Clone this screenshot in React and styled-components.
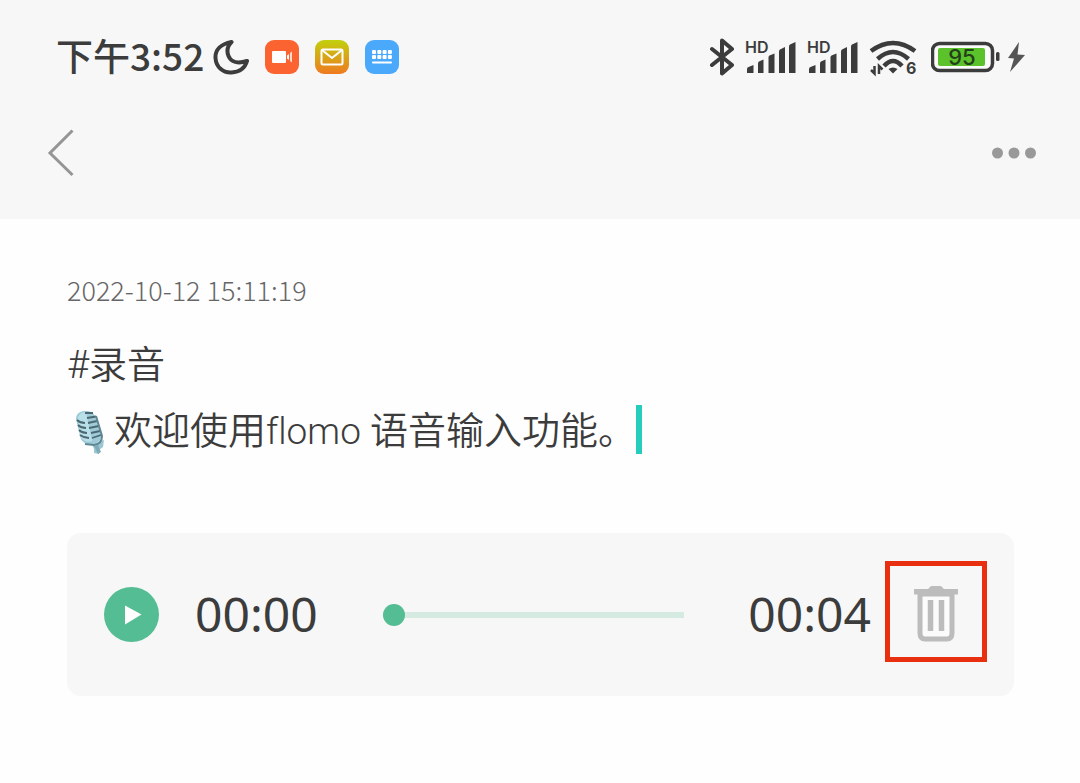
import React, { useState } from 'react';
import styled, { createGlobalStyle } from 'styled-components';

const GlobalStyle = createGlobalStyle`
  body {
    margin: 0;
    background-color: #fefefe;
    color: #3c3c3c;
    font-family: Roboto, 'Noto Sans CJK SC', sans-serif;
  }

  button {
    padding: 0;
    border: none;
    background: none;
    cursor: pointer;
  }

  svg {
    display: block;
    flex-shrink: 0;
  }
`;

const Header = styled.header`
  background-color: #f7f7f7;
  padding-bottom: 39px;
`;

const StatusBar = styled.div`
  display: flex;
  justify-content: space-between;
  align-items: center;
  height: 114px;
  padding: 0 54px 0 56px;
`;

const StatusGroup = styled.div`
  display: flex;
  align-items: center;
  gap: ${(props) => props.$gap}px;
`;

const Clock = styled.time`
  padding-bottom: 4px;
  font-family: 'Noto Sans CJK SC', sans-serif;
  font-size: 37px;
  line-height: 40px;
  font-weight: 500;
`;

const AppBadges = styled.div`
  display: flex;
  gap: 16px;
  margin-left: 7px;
`;

const AppBadge = styled.span`
  display: flex;
  justify-content: center;
  align-items: center;
  width: 34px;
  height: 34px;
  border-radius: 9px;
  background: ${(props) => props.$fill};
`;

const NavBar = styled.nav`
  display: flex;
  justify-content: space-between;
  align-items: center;
  height: 62px;
  padding: 8px 42px 0 46px;
  box-sizing: border-box;
  margin-top: 4px;
`;

const Memo = styled.main`
  padding: 53px 66px 88px 67px;
`;

const MemoDate = styled.time`
  display: block;
  font-family: 'Noto Sans CJK SC', sans-serif;
  font-size: 27px;
  line-height: 36px;
  font-weight: 300;
  color: #666;
`;

const Editor = styled.div`
  margin-top: 24px;
  font-size: 38px;
  line-height: 66px;
  font-weight: 350;
  font-variant-ligatures: none;
  outline: none;
`;

const Line = styled.p`
  display: flex;
  align-items: center;
  margin: 0;
  white-space: pre;
`;

const Latin = styled.span`
  font-size: 37px;
`;

const Caret = styled.span`
  width: 6px;
  height: 49px;
  margin-bottom: 4px;
  background-color: #26cdbd;
`;

const Player = styled.section`
  display: flex;
  align-items: center;
  height: 163px;
  margin-top: 68px;
  padding: 0 27px 0 37px;
  border-radius: 14px;
  background-color: #f7f7f7;
`;

const PlayButton = styled.button`
  display: flex;
  justify-content: center;
  align-items: center;
  flex-shrink: 0;
  width: 55px;
  height: 55px;
  border-radius: 50%;
  background-color: #54bd93;
`;

const TrackTime = styled.span`
  margin: 0 ${(props) => props.$right}px 0 ${(props) => props.$left}px;
  padding-bottom: 2px;
  font-family: 'Noto Sans', sans-serif;
  font-size: 48px;
  line-height: 56px;
`;

const Seek = styled.input`
  appearance: none;
  flex: 1;
  min-width: 0;
  height: 22px;
  margin: 0;
  background: linear-gradient(#d5ebe1, #d5ebe1) center / 100% 6px no-repeat;
  cursor: pointer;

  &::-webkit-slider-thumb {
    appearance: none;
    width: 22px;
    height: 22px;
    border-radius: 50%;
    background-color: #54bd93;
  }
`;

const DeleteButton = styled.button`
  display: flex;
  justify-content: center;
  align-items: center;
  flex-shrink: 0;
  box-sizing: border-box;
  width: 102px;
  height: 101px;
  margin-bottom: 6px;

  && {
    padding-top: 5px;
    border: 5px solid #e83010;
  }
`;

const MoonIcon = () => (
  <svg width="36" height="36" viewBox="0 0 36 36" fill="none" stroke="#3c3c3c" strokeWidth="4" strokeLinejoin="round">
    <path d="M18.500 3C8 5 2 11 2.500 19C3 28 10 34 18.500 33.500C26 33 32 29 34 22C25 25 18 23 15.500 17C13.500 12 14.500 7 18.500 3Z" />
  </svg>
);

const VideoIcon = () => (
  <svg width="22" height="16" viewBox="0 0 22 16" fill="#fff">
    <rect x="1" y="2" width="14" height="12" rx="1" />
    <path d="M16 6.500L18 5V11L16 9.500Z" />
    <path d="M19 4L21 2.500V13.500L19 12Z" opacity=".75" />
  </svg>
);

const MailIcon = () => (
  <svg width="24" height="18" viewBox="0 0 24 18" fill="none" stroke="#fff" strokeWidth="2" strokeLinejoin="round">
    <rect x="1.500" y="1.500" width="21" height="15" rx="1.500" />
    <path d="M2 2L12 10L22 2" />
  </svg>
);

const KeyboardIcon = () => (
  <svg width="22" height="16" viewBox="0 0 22 16" fill="#fff">
    {[1, 6.300, 11.600, 16.900].map((x) => (
      <React.Fragment key={x}>
        <rect x={x} y="1" width="4" height="4" rx="1" />
        <rect x={x} y="6" width="4" height="4" rx="1" />
      </React.Fragment>
    ))}
    <rect x="1" y="12.500" width="20" height="2" rx="1" />
  </svg>
);

const BluetoothIcon = () => (
  <svg width="26" height="38" viewBox="0 0 26 38" fill="none" stroke="#3c3c3c" strokeWidth="4" strokeLinejoin="round" strokeLinecap="round">
    <path d="M3 11L23 27L13 35.500V2.500L23 11L3 27" />
  </svg>
);

const SignalIcon = () => (
  <svg width="52" height="44" viewBox="0 -4 52 44" fill="#3c3c3c">
    <text x="0" y="14" fontFamily="Inter, sans-serif" fontSize="16" fontWeight="600">HD</text>
    <path d="M2 34V30Q2 28.500 3.500 28L8.500 26V34Z" />
    <path d="M13 34V24.500Q13 23 14 22.500L18.500 20.500V34Z" />
    <path d="M23.500 34V18.500Q23.500 17 24.500 16.500L29.500 14.500V34Z" />
    <path d="M34 34V12.500Q34 11 35 10.500L40 8V34Z" />
    <path d="M44 34V7.500Q44 6 45 5.500L50.500 3V34Z" />
  </svg>
);

const WifiIcon = () => (
  <svg width="52" height="48" viewBox="0 -5 52 48" fill="none" stroke="#3c3c3c" strokeWidth="4.500">
    <path d="M2 13Q24 -3 46 13" />
    <path d="M8.500 21Q24 7 39.500 21" />
    <path d="M15 28Q24 18 33 28" />
    <path d="M19.500 31Q24 28 28.500 31L24 35.500Z" fill="#3c3c3c" stroke="none" />
    <path d="M5.500 28V35.500L2 32M10 36V28L13.500 31.500" strokeWidth="2.500" />
    <text x="37" y="36" fill="#3c3c3c" stroke="none" fontFamily="Inter, sans-serif" fontSize="16" fontWeight="700">6</text>
  </svg>
);

const BatteryIcon = () => (
  <svg width="70" height="32" viewBox="0 0 70 32">
    <rect x="1.500" y="2.500" width="60" height="27" rx="7" fill="#fbfbfb" stroke="#3c3c3c" strokeWidth="3.500" />
    <rect x="7" y="7" width="47" height="18" rx="2" fill="#5bc22b" />
    <rect x="65" y="11" width="3.500" height="9" rx="1.500" fill="#3c3c3c" />
    <text x="31" y="24" textAnchor="middle" fill="#23401a" fontFamily="Inter, sans-serif" fontSize="22" fontWeight="500">95</text>
  </svg>
);

const BoltIcon = () => (
  <svg width="20" height="32" viewBox="0 0 20 32" fill="#555">
    <path d="M13 1L2 17L8 17.500L4 31L19 14L11.500 13.500Z" />
  </svg>
);

const BackIcon = () => (
  <svg width="30" height="48" viewBox="0 0 30 48" fill="none" stroke="#959595" strokeWidth="3">
    <path d="M26.500 1.500L4 24L26.500 46" />
  </svg>
);

const MoreIcon = () => (
  <svg width="48" height="12" viewBox="0 0 48 12" fill="#999">
    <circle cx="7.500" cy="6" r="5.500" />
    <circle cx="24" cy="6" r="5.500" />
    <circle cx="40.500" cy="6" r="5.500" />
  </svg>
);

const MicIcon = () => (
  <svg width="47" height="48" viewBox="0 0 47 48">
    <path d="M25 36L37 32L36 39L32 42V46L27 45V41Z" fill="#9cc6d3" />
    <path d="M9 11C9 5 14 2.500 20 3C25 3.500 28 6 29 11L34 26C35 32 31 35 26 36C19 37 14 34 13 28Z" fill="#9fcbd8" />
    <path d="M11 10C12 6 15 4 19 4L25 33C18 35 14 31 13 27Z" fill="#b9dfe8" />
    <g stroke="#4b6873" strokeWidth="1.800" fill="none">
      <path d="M18 5L26 5M20 10L29 8.500M21 15L30 13M22 20L32 18M24 25L33 23M25 30L34 27" />
      <path d="M10 12Q13 15 18 15M11 17Q14 20 19 20M12 22Q15 25 20 25M13 27Q17 30 22 30" />
      <path d="M29 8L35 28Q35 36 27 37L18 36" stroke="#5f8794" strokeWidth="2" />
    </g>
    <path d="M27 38L31 37L34 44L31 46Z" fill="#7faab8" />
  </svg>
);

const PlayIcon = () => (
  <svg width="20" height="20" viewBox="0 0 20 20" fill="#fff">
    <path d="M3 0.500L19.500 9.500L3 19.500Z" />
  </svg>
);

const TrashIcon = () => (
  <svg width="44" height="56" viewBox="0 0 44 56">
    <path d="M6 8H38V47Q38 53 33 53H11Q6 53 6 47Z" fill="#fbfbfb" stroke="#bcbcbc" strokeWidth="5" />
    <path d="M0 3H14L17 0H27L30 3H44V8.500H0Z" fill="#bcbcbc" />
    <path d="M16.500 14V45M27.500 14V45" stroke="#bcbcbc" strokeWidth="5.500" />
  </svg>
);

const App = () => {
  const [position, setPosition] = useState(0);

  return (
    <>
      <GlobalStyle />
      <Header>
        <StatusBar>
          <StatusGroup $gap={9}>
            <Clock>下午3:52</Clock>
            <MoonIcon />
            <AppBadges>
              <AppBadge $fill="#fb6331"><VideoIcon /></AppBadge>
              <AppBadge $fill="linear-gradient(#c2d00e, #ef7a20)"><MailIcon /></AppBadge>
              <AppBadge $fill="#4ba9fb"><KeyboardIcon /></AppBadge>
            </AppBadges>
          </StatusGroup>
          <StatusGroup $gap={10}>
            <BluetoothIcon />
            <SignalIcon />
            <SignalIcon />
            <WifiIcon />
            <StatusGroup $gap={5}>
              <BatteryIcon />
              <BoltIcon />
            </StatusGroup>
          </StatusGroup>
        </StatusBar>
        <NavBar>
          <button type="button" aria-label="返回"><BackIcon /></button>
          <button type="button" aria-label="更多"><MoreIcon /></button>
        </NavBar>
      </Header>
      <Memo>
        <MemoDate>2022-10-12 15:11:19</MemoDate>
        <Editor role="textbox" aria-multiline="true" aria-label="笔记内容" contentEditable suppressContentEditableWarning spellCheck={false}>
          <Line>#录音</Line>
          <Line>
            <MicIcon />
            <span>欢迎使用<Latin>flomo </Latin>语音输入功能。</span>
            <Caret />
          </Line>
        </Editor>
        <Player aria-label="录音">
          <PlayButton type="button" aria-label="播放"><PlayIcon /></PlayButton>
          <TrackTime $left={36} $right={65}>00:00</TrackTime>
          <Seek
            type="range"
            aria-label="播放进度"
            min="0"
            max="4"
            value={position}
            onChange={(e) => setPosition(Number(e.target.value))}
          />
          <TrackTime $left={64} $right={14}>00:04</TrackTime>
          <DeleteButton type="button" aria-label="删除录音"><TrashIcon /></DeleteButton>
        </Player>
      </Memo>
    </>
  );
};

export default App;
